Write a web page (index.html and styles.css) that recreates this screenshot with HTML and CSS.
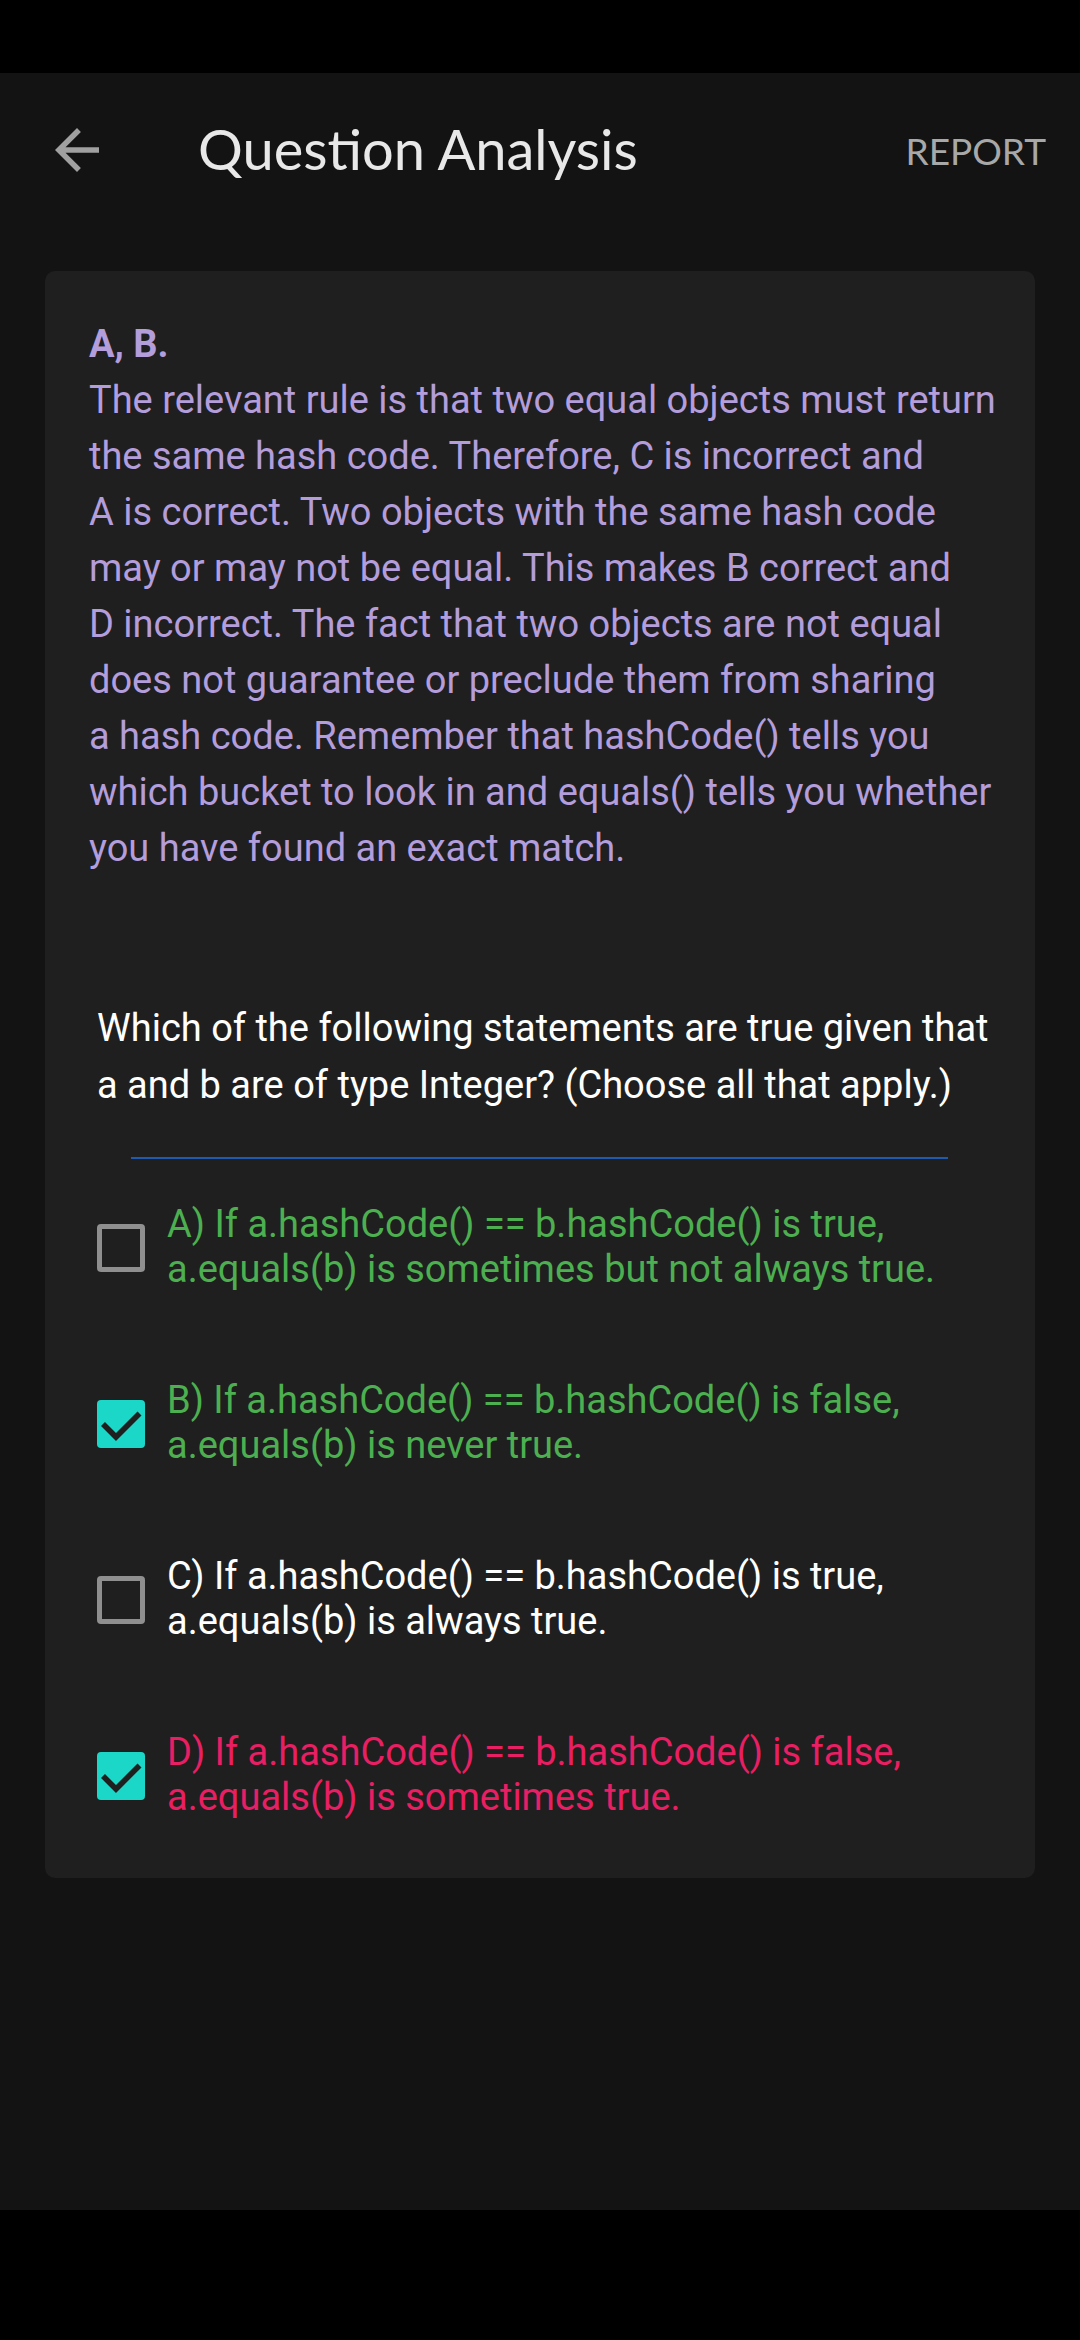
FILE: index.html
```html
<!DOCTYPE html>
<html lang="en">
<head>
<meta charset="utf-8">
<title>Question Analysis</title>
<link rel="stylesheet" href="styles.css">
</head>
<body>
<div class="screen">
  <div class="status-bar"></div>
  <header class="app-bar">
    <button class="back" aria-label="Back">
      <svg viewBox="4 4 16 16" width="44" height="44"><path d="M20 11H7.83l5.59-5.59L12 4l-8 8 8 8 1.41-1.41L7.83 13H20v-2z" fill="#a0a0a0"/></svg>
    </button>
    <h1 class="title">Question Analysis</h1>
    <span class="report">REPORT</span>
  </header>
  <main class="content">
    <section class="card">
      <p class="explanation"><strong>A, B.</strong><br>The relevant rule is that two equal objects must return<br>the same hash code. Therefore, C is incorrect and<br>A is correct. Two objects with the same hash code<br>may or may not be equal. This makes B correct and<br>D incorrect. The fact that two objects are not equal<br>does not guarantee or preclude them from sharing<br>a hash code. Remember that hashCode() tells you<br>which bucket to look in and equals() tells you whether<br>you have found an exact match.</p>
      <p class="question">Which of the following statements are true given that<br>a and b are of type Integer? (Choose all that apply.)</p>
      <hr class="divider">
      <ul class="options">
        <li class="option correct">
          <span class="box"></span>
          <span class="opt-text">A) If a.hashCode() == b.hashCode() is true,<br>a.equals(b) is sometimes but not always true.</span>
        </li>
        <li class="option correct">
          <span class="box checked"><svg viewBox="0 0 48 48" width="48" height="48"><polyline points="6,24 19,37 42.5,13.5" fill="none" stroke="#1f1f1f" stroke-width="5.6"/></svg></span>
          <span class="opt-text">B) If a.hashCode() == b.hashCode() is false,<br>a.equals(b) is never true.</span>
        </li>
        <li class="option">
          <span class="box"></span>
          <span class="opt-text">C) If a.hashCode() == b.hashCode() is true,<br>a.equals(b) is always true.</span>
        </li>
        <li class="option wrong">
          <span class="box checked"><svg viewBox="0 0 48 48" width="48" height="48"><polyline points="6,24 19,37 42.5,13.5" fill="none" stroke="#1f1f1f" stroke-width="5.6"/></svg></span>
          <span class="opt-text">D) If a.hashCode() == b.hashCode() is false,<br>a.equals(b) is sometimes true.</span>
        </li>
      </ul>
    </section>
  </main>
  <div class="nav-bar"></div>
</div>
</body>
</html>
```

FILE: styles.css
```css
* { box-sizing: border-box; }
html, body {
  margin: 0;
  padding: 0;
  background: #000;
}
body {
  font-family: Roboto, "Noto Sans", sans-serif;
  width: 1080px;
  height: 2340px;
  overflow: hidden;
}
.screen {
  display: flex;
  flex-direction: column;
  height: 2340px;
  background: #131313;
}
.status-bar {
  height: 73px;
  background: #000;
  flex: none;
}
.app-bar {
  height: 154px;
  flex: none;
  display: flex;
  align-items: center;
  padding: 0 34px 0 55px;
}
.back {
  background: none;
  border: 0;
  padding: 0;
  width: 44px;
  height: 44px;
  display: flex;
}
.title {
  margin: 0 0 0 99px;
  flex: 1;
  font-family: Lato, "Open Sans", sans-serif;
  font-weight: 400;
  font-size: 56px;
  color: #e8e8e8;
  line-height: 1;
  position: relative;
  top: -1px;
}
.report {
  font-family: Lato, "Open Sans", sans-serif;
  font-size: 37px;
  color: #a8a8a8;
}
.content {
  flex: 1;
  padding: 44px 45px 0;
}
.card {
  background: #1f1f1f;
  border-radius: 10px;
  padding: 45px 30px 15px 44px;
}
.explanation {
  margin: 0;
  font-size: 38px;
  line-height: 56px;
  color: #b39ddb;
  white-space: nowrap;
}
.explanation strong {
  font-weight: 700;
}
.question {
  margin: 124px 0 0 8px;
  font-size: 38px;
  line-height: 57px;
  color: #ffffff;
  white-space: nowrap;
}
.divider {
  border: 0;
  height: 2px;
  background: #1e5bb0;
  margin: 43px 57px 0 42px;
}
.options {
  list-style: none;
  margin: 0;
  padding: 0 0 0 8px;
}
.option {
  display: flex;
  align-items: center;
  gap: 22px;
  padding: 43px 0;
  font-size: 38px;
  line-height: 45px;
  color: #ffffff;
  white-space: nowrap;
}
.option.correct { color: #4caf50; }
.option.wrong { color: #e91e63; }
.box {
  flex: none;
  width: 48px;
  height: 48px;
  border: 5px solid #8f8f8f;
  border-radius: 4px;
  position: relative;
  top: 1px;
}
.box.checked {
  border: 0;
  background: #1bd7c7;
}
.box svg { display: block; }
.nav-bar {
  height: 130px;
  flex: none;
  background: #000;
}
```
